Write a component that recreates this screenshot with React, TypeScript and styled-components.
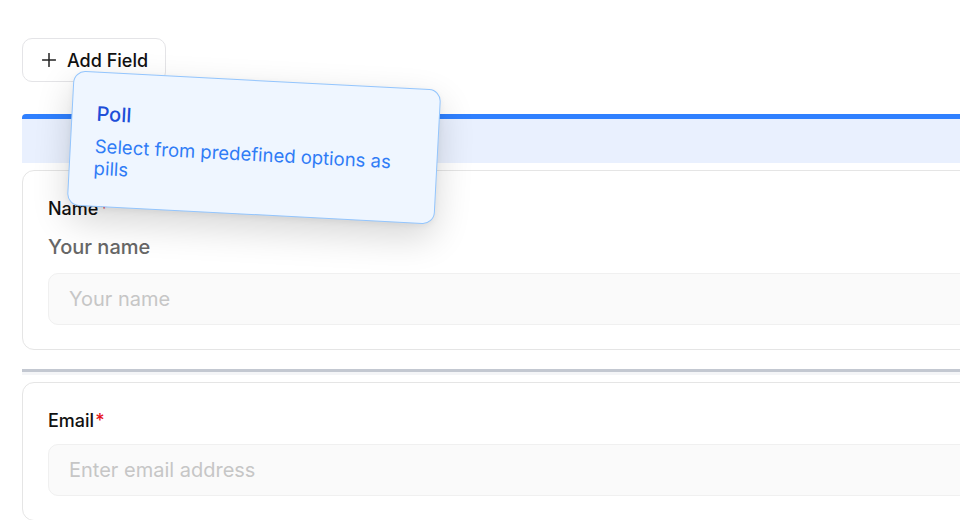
import React from 'react'
import styled, { createGlobalStyle } from 'styled-components'

const GlobalStyle = createGlobalStyle`
  html, body {
    margin: 0;
    padding: 0;
    background: #ffffff;
    overflow: hidden;
  }
  body {
    font-family: Inter, "Noto Sans", "Liberation Sans", sans-serif;
    color: #111111;
    -webkit-font-smoothing: antialiased;
  }
  * {
    box-sizing: border-box;
  }
`

const Page = styled.div`
  position: relative;
  width: 1120px;
  height: 520px;
  padding: 38px 0 0 22px;
`

const Toolbar = styled.div`
  display: flex;
  align-items: center;
`

const AddButton = styled.button`
  display: flex;
  align-items: center;
  gap: 11px;
  height: 44px;
  padding: 0 17px 0 19px;
  border: 1px solid #e4e4e7;
  border-radius: 10px;
  background: #ffffff;
  font-family: inherit;
  font-size: 18px;
  font-weight: 500;
  color: #111111;
  cursor: pointer;
`

const FieldList = styled.div`
  display: flex;
  flex-direction: column;
  gap: 7px;
  margin-top: 32px;
`

const DropIndicator = styled.div`
  height: 49px;
  border-top: 5px solid #2f80ff;
  border-radius: 4px 4px 0 0;
  background: #e9f0fe;
`

const Divider = styled.div`
  margin-top: 12px;
  height: 6px;
  border-top: 3px solid #c3c8d1;
  background: #f4f5f7;
`

const Card = styled.div`
  display: flex;
  flex-direction: column;
  padding: 24px 25px;
  border: 1px solid #e5e5e5;
  border-radius: 12px;
  background: #ffffff;
`

const Label = styled.div<{ $gap: number }>`
  font-size: 18px;
  font-weight: 500;
  line-height: 28px;
  color: #111111;
  margin-bottom: ${({ $gap }) => $gap}px;
`

const Required = styled.span`
  color: #e5141b;
  margin-left: 1px;
`

const Description = styled.div`
  font-size: 20px;
  font-weight: 500;
  line-height: 28px;
  color: #676767;
  margin-bottom: 12px;
`

const Input = styled.input`
  height: 52px;
  width: 100%;
  padding: 0 20px;
  border: 1px solid #f0f0f0;
  border-radius: 10px;
  background: #fafafa;
  font-family: inherit;
  font-size: 20px;
  color: #111111;
  outline: none;

  &::placeholder {
    color: #c6c6c6;
  }
`

const DragOverlay = styled.div`
  position: absolute;
  left: 70px;
  top: 80px;
  width: 368px;
  height: 135px;
  padding: 27px 24px;
  border: 1.5px solid #93c5fd;
  border-radius: 12px;
  background: #eff6ff;
  box-shadow: 0 14px 36px rgba(0, 0, 0, 0.16), 0 2px 6px rgba(0, 0, 0, 0.05);
  transform: rotate(3deg);
`

const OverlayTitle = styled.div`
  font-size: 20px;
  font-weight: 500;
  line-height: 28px;
  color: #1d4ed8;
  margin-bottom: 7px;
`

const OverlayText = styled.div`
  font-size: 18.5px;
  line-height: 22px;
  color: #2f7cf6;
`

const PlusIcon = () => (
  <svg width="14" height="14" viewBox="0 0 14 14" fill="none">
    <path d="M7 0.5v13M0.5 7h13" stroke="#222" strokeWidth="1.5" strokeLinecap="round" />
  </svg>
)

type Field = {
  id: string
  label: string
  required: boolean
  description?: string
  placeholder: string
}

const fields: Field[] = [
  { id: 'name', label: 'Name', required: true, description: 'Your name', placeholder: 'Your name' },
  { id: 'email', label: 'Email', required: true, placeholder: 'Enter email address' },
]

const FieldCard = ({ field }: { field: Field }) => (
  <Card>
    <Label $gap={field.description ? 10 : 9}>
      {field.label}
      {field.required && <Required>*</Required>}
    </Label>
    {field.description && <Description>{field.description}</Description>}
    <Input placeholder={field.placeholder} readOnly />
  </Card>
)

export default function App() {
  return (
    <Page>
      <GlobalStyle />
      <Toolbar>
        <AddButton>
          <PlusIcon />
          Add Field
        </AddButton>
      </Toolbar>
      <FieldList>
        <DropIndicator />
        <FieldCard field={fields[0]} />
        <Divider />
        <FieldCard field={fields[1]} />
      </FieldList>
      <DragOverlay>
        <OverlayTitle>Poll</OverlayTitle>
        <OverlayText>Select from predefined options as pills</OverlayText>
      </DragOverlay>
    </Page>
  )
}
